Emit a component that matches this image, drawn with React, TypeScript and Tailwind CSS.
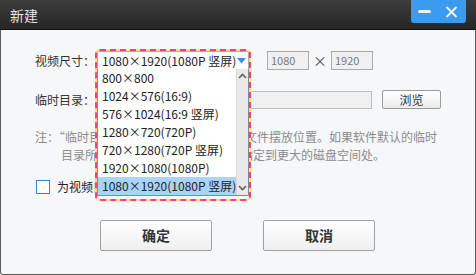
import React from "react";

const items = [
  "800×800",
  "1024×576(16:9)",
  "576×1024(16:9 竖屏)",
  "1280×720(720P)",
  "720×1280(720P 竖屏)",
  "1920×1080(1080P)",
  "1080×1920(1080P 竖屏)",
];

function Chevron({ up }: { up?: boolean }) {
  return (
    <svg width="9" height="6" viewBox="0 0 9 6" className={up ? "" : "rotate-180"}>
      <path d="M1 5 L4.5 1.5 L8 5" fill="none" stroke="#606060" strokeWidth="1.6" />
    </svg>
  );
}

export default function App() {
  return (
    <div className="w-[476px] h-[275px] flex flex-col overflow-hidden font-['Noto_Sans_CJK_SC','Noto_Sans',sans-serif] text-[12px]">
      {/* title bar */}
      <div className="h-[30px] shrink-0 bg-gradient-to-b from-[#3d3d3d] to-[#262626] border-b border-[#141414] flex items-start justify-between pl-[10px] pr-[10px]">
        <span className="text-[#e4e4e4] text-[14px] leading-[30px]">新建</span>
        <div className="w-[55px] h-[23px] bg-[#3a9bef] rounded-b-[3px] flex items-center pl-[7px]">
          <div className="w-[13px] h-[3px] rounded-full bg-[#e8f2fb]" />
          <svg width="13" height="12" viewBox="0 0 13 12" className="ml-[14px]">
            <path d="M1.5 1 L11.5 11 M11.5 1 L1.5 11" stroke="#f4f8fc" strokeWidth="1.8" />
          </svg>
        </div>
      </div>

      {/* body */}
      <div className="flex-1 bg-[#f6f7f9] border-x border-b border-[#5a5a5a] rounded-b-[3px] pl-[34px] pt-[21px] text-[#333]">
        {/* row 1 */}
        <div className="flex items-center h-[19px]">
          <span className="w-[62px]">视频尺寸：</span>
          <div className="relative w-[152px] h-[19px] bg-white border border-[#a8a8a8] flex items-center justify-between pl-[4px] pr-[2px] z-10">
            <span className="text-[#222] whitespace-nowrap leading-none">1080×1920(1080P 竖屏)</span>
            <svg width="9" height="6" viewBox="0 0 9 6">
              <path d="M0 0 H9 L4.5 5.5 Z" fill="#3a8fe4" />
            </svg>

            {/* dropdown list */}
            <div className="absolute left-[-1px] top-full w-[152px] h-[127px] bg-white border border-[#8a8a8a] border-t-0 flex">
              <div className="flex-1 flex flex-col">
                {items.map((t, i) => (
                  <div
                    key={t}
                    className={
                      i === items.length - 1
                        ? "h-[18px] leading-[18px] pl-[4px] whitespace-nowrap text-[#222] bg-[#a9d3f8]"
                        : "h-[18px] leading-[18px] pl-[4px] whitespace-nowrap text-[#222]"
                    }
                  >
                    {t}
                  </div>
                ))}
              </div>
              <div className="w-[14px] bg-[#e9e9e9] border-l border-[#d8d8d8] flex flex-col justify-between items-center py-[4px]">
                <Chevron up />
                <Chevron />
              </div>
            </div>

            {/* annotation outline */}
            <div className="absolute left-[-3px] top-[-3px] w-[156px] h-[152px] rounded-[5px] border-2 border-[#fbe56b] pointer-events-none" />
            <div className="absolute left-[-3px] top-[-3px] w-[156px] h-[152px] rounded-[5px] border-2 border-dashed border-[#ff3a8c] pointer-events-none" />
          </div>
          <div className="ml-[18px] w-[42px] h-[19px] bg-[#f0f0f0] border border-[#ababab] text-[#7a7a7a] text-[11px] pl-[3px] leading-[17px]">1080</div>
          <span className="w-[22px] text-center text-[#555] text-[14px]">×</span>
          <div className="w-[42px] h-[19px] bg-[#f0f0f0] border border-[#ababab] text-[#7a7a7a] text-[11px] pl-[3px] leading-[17px]">1920</div>
        </div>

        {/* row 2 */}
        <div className="flex items-center h-[19px] mt-[20px]">
          <span className="w-[62px]">临时目录：</span>
          <div className="w-[275px] h-[18px] bg-[#f0f0f0] border border-[#bdbdbd]" />
          <button className="ml-[10px] w-[59px] h-[19px] border border-[#9a9a9a] rounded-[2px] bg-gradient-to-b from-white to-[#ececec] text-[#333] leading-none">浏览</button>
        </div>

        {/* note */}
        <div className="mt-[19px] text-[#8c8c8c] leading-[18px] whitespace-nowrap">
          <div>注：“临时目录”是指生成视频时的中间文件摆放位置。如果软件默认的临时</div>
          <div className="pl-[26px]">目录所在磁盘的空间不够，可将其指定到更大的磁盘空间处。</div>
        </div>

        {/* checkbox */}
        <div className="flex items-center mt-[16px] h-[14px]">
          <div className="ml-[1px] w-[14px] h-[14px] bg-white border border-[#3a7fd2]" />
          <span className="ml-[7px] text-[#222]">为视频自动添加片头</span>
        </div>

        {/* buttons */}
        <div className="flex mt-[26px] ml-[65px] gap-[51px]">
          <button className="w-[112px] h-[31px] border border-[#a2a2a2] rounded-[2px] bg-gradient-to-b from-white to-[#efefef] text-[14px] font-bold text-[#333]">确定</button>
          <button className="w-[112px] h-[31px] border border-[#a2a2a2] rounded-[2px] bg-gradient-to-b from-white to-[#efefef] text-[14px] font-bold text-[#333]">取消</button>
        </div>
      </div>
    </div>
  );
}
